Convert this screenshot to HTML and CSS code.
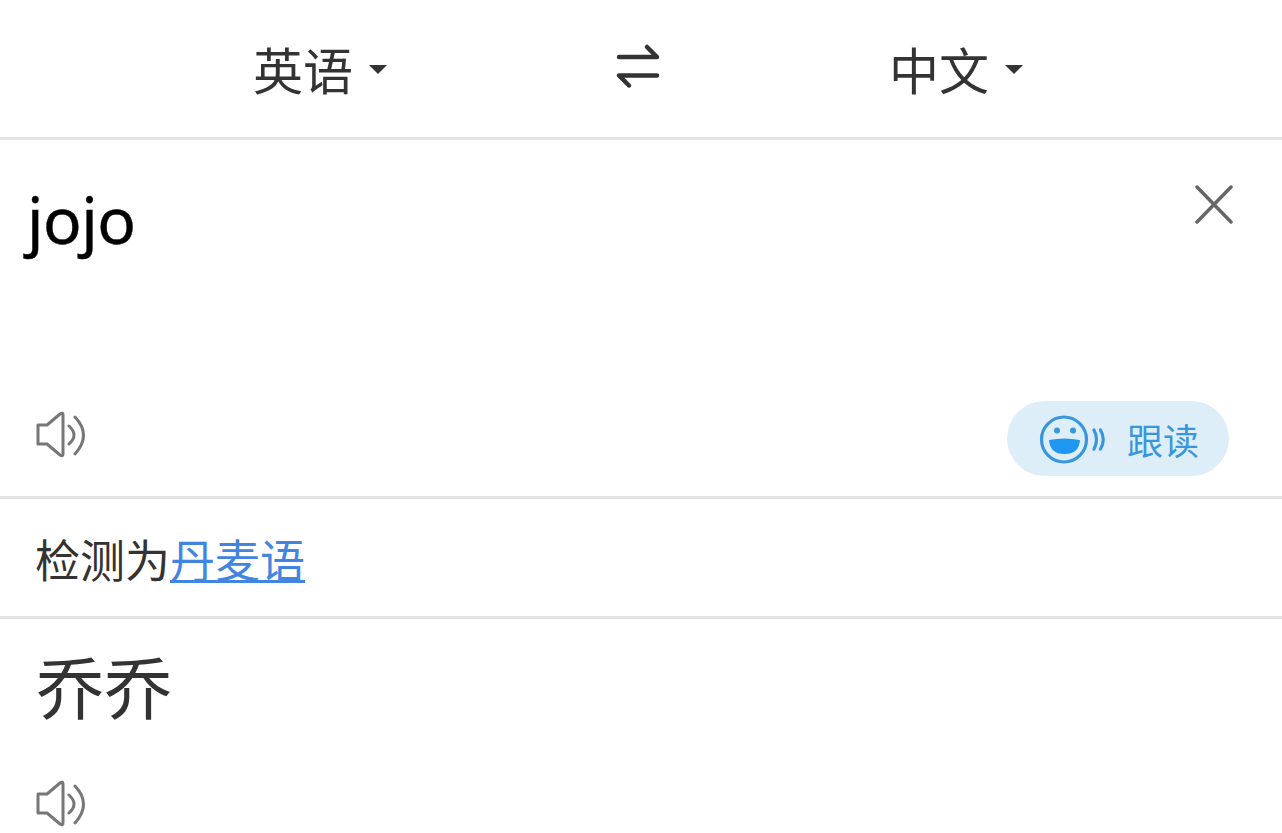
FILE: index.html
```html
<!DOCTYPE html>
<html lang="zh">
<head>
<meta charset="utf-8">
<title>翻译</title>
<link rel="stylesheet" href="styles.css">
</head>
<body>
<header class="langbar">
  <div class="lang lang-from">英语<span class="caret"></span></div>
  <svg class="swap" width="46" height="46" viewBox="0 0 46 46"><path d="M3 19H41L31 9M41 37.500H3L13 47.500" transform="translate(0 -4)" fill="none" stroke="#333" stroke-width="4.500" stroke-linecap="round" stroke-linejoin="round"/></svg>
  <div class="lang lang-to">中文<span class="caret"></span></div>
</header>
<section class="input">
  <div class="input-top">
    <div class="query">jojo</div>
    <svg class="close" width="40" height="40" viewBox="0 0 40 40"><path d="M3 3L37 38M37 3L3 38" stroke="#666" stroke-width="3.500" stroke-linecap="round"/></svg>
  </div>
  <div class="input-bottom">
    <svg class="speaker" width="50" height="48" viewBox="0 0 50 48"><path d="M2 14H11L24 3Q27 1 27 4V43Q27 46 24 44L11 33H2Z" fill="none" stroke="#777" stroke-width="3" stroke-linejoin="round"/><path d="M33 15Q43 24 33 33M39 6Q56 24 39 43" fill="none" stroke="#777" stroke-width="3" stroke-linecap="round"/></svg>
    <div class="follow">
      <svg class="smile" width="68" height="50" viewBox="0 0 68 50"><circle cx="25" cy="25.500" r="22.500" fill="none" stroke="#3a96dc" stroke-width="3.200"/><circle cx="18" cy="16.500" r="3" fill="#3a96dc"/><circle cx="34" cy="16.500" r="3" fill="#3a96dc"/><path d="M10 26Q25 23 41 26Q40 40 25.500 40Q11 40 10 26Z" fill="#1f96f0"/><path d="M55 16Q60 25.500 55 35M61.500 16Q67 25.500 61.500 35" fill="none" stroke="#3a96dc" stroke-width="3.200" stroke-linecap="round"/></svg>
      <span class="follow-label">跟读</span>
    </div>
  </div>
</section>
<section class="detect">检测为<a class="detect-link" href="#">丹麦语</a></section>
<section class="result">
  <div class="result-text">乔乔</div>
  <svg class="speaker" width="50" height="48" viewBox="0 0 50 48"><path d="M2 14H11L24 3Q27 1 27 4V43Q27 46 24 44L11 33H2Z" fill="none" stroke="#777" stroke-width="3" stroke-linejoin="round"/><path d="M33 15Q43 24 33 33M39 6Q56 24 39 43" fill="none" stroke="#777" stroke-width="3" stroke-linecap="round"/></svg>
</section>
</body>
</html>
```
FILE: styles.css
```css
html, body {
  margin: 0;
  padding: 0;
  height: 100%;
  overflow: hidden;
  background: #fff;
  font-family: "Noto Sans CJK SC", "Liberation Sans", sans-serif;
  color: #333;
}
.langbar {
  height: 137px;
  border-bottom: 3px solid #e4e4e4;
  display: grid;
  grid-template-columns: 616px 46px 1fr;
  align-items: center;
}
.lang {
  font-size: 50px;
  line-height: 60px;
  display: flex;
  align-items: center;
  white-space: nowrap;
  padding-bottom: 2px;
}
.lang-from { padding-left: 253px; }
.lang-to { padding-left: 227px; }
.caret {
  width: 0;
  height: 0;
  margin-left: 16px;
  margin-top: 4px;
  border-left: 9.500px solid transparent;
  border-right: 9.500px solid transparent;
  border-top: 9px solid #333;
}
.swap { margin-top: -8px; overflow: visible; }
.input {
  height: 356px;
  border-bottom: 3px solid #e4e4e4;
  display: flex;
  flex-direction: column;
  justify-content: space-between;
}
.input-top {
  display: flex;
  justify-content: space-between;
  padding: 42px 48px 0 27px;
}
.query {
  font-family: "Noto Sans", "Liberation Sans", sans-serif;
  font-size: 64px;
  line-height: 76px;
  color: #000;
  letter-spacing: -0.500px;
  -webkit-text-stroke: 0.400px #000;
}
.close { margin-top: 2px; width: 40px; height: 40px; }
.input-bottom {
  display: flex;
  justify-content: space-between;
  align-items: flex-start;
  padding: 0 53px 20px 36px;
}
.speaker { display: block; }
.follow {
  width: 222px;
  height: 75px;
  border-radius: 38px;
  background: #deeef9;
  display: flex;
  align-items: center;
  box-sizing: border-box;
  padding-left: 32px;
  margin-top: -10px;
}
.follow-label {
  margin-left: 20px;
  font-size: 36px;
  color: #3a96dc;
  line-height: 1;
}
.detect {
  height: 117px;
  border-bottom: 3px solid #e4e4e4;
  padding-left: 35px;
  font-size: 45px;
  line-height: 119px;
  color: #333;
}
.detect-link {
  color: #4285e0;
  text-decoration: underline;
  text-decoration-thickness: 3px;
  text-underline-offset: 2px;
}
.result {
  padding-left: 36px;
}
.result-text {
  font-size: 68px;
  line-height: 80px;
  margin-top: 26px;
  margin-bottom: 55px;
}
```
